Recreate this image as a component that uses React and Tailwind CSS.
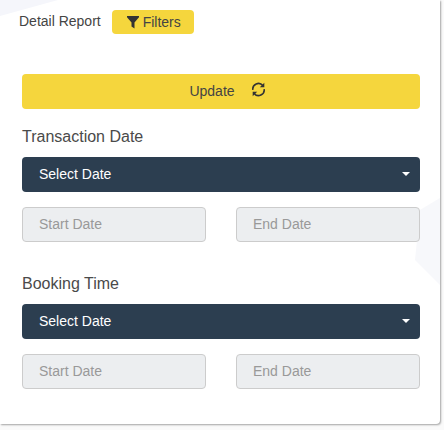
import React from "react";

const FONT = { fontFamily: '"Liberation Sans", Arial, sans-serif' };

const FilterIcon = () => (
  <svg width="12" height="14" viewBox="0 0 12 14" className="text-[#333]">
    <path d="M0 1h12v1.2L7.5 7.4V13.5L4.5 11.4V7.4L0 2.2z" fill="currentColor" />
  </svg>
);

const RefreshIcon = () => (
  <svg width="15" height="15" viewBox="0 0 16 16" fill="none" className="-mt-[4px] text-[#333]">
    <path d="M2 8.5A6 6 0 0 1 12.6 3.8" stroke="currentColor" strokeWidth="1.7" />
    <path d="M14 7.5A6 6 0 0 1 3.4 12.2" stroke="currentColor" strokeWidth="1.7" />
    <path d="M14.2 0.8V5.6H9.4z" fill="currentColor" />
    <path d="M1.8 15.2V10.4H6.6z" fill="currentColor" />
  </svg>
);

const DateSection = ({ label, labelClass }) => (
  <div>
    <div className={`text-base leading-[18px] text-[#4a4a4a] ${labelClass}`}>{label}</div>
    <div className="mt-[11px] flex h-[35px] items-center justify-between rounded-[4px] bg-[#2c3e50] pb-px pl-[17px] pr-[10px] text-sm text-white">
      <span>Select Date</span>
      <span className="h-0 w-0 border-x-[4px] border-t-[4px] border-x-transparent border-t-white" />
    </div>
    <div className="mt-[15px] flex justify-between">
      <div className="flex h-[35px] w-[184px] items-center rounded-[4px] border border-[#ccc] bg-[#eceef0] pb-px pl-[16px] text-sm text-[#999]">
        Start Date
      </div>
      <div className="flex h-[35px] w-[184px] items-center rounded-[4px] border border-[#ccc] bg-[#eceef0] pb-px pl-[16px] text-sm text-[#999]">
        End Date
      </div>
    </div>
  </div>
);

const App = () => {
  return (
    <div className="h-[430px] w-[444px] overflow-hidden bg-[#fafafa]" style={FONT}>
      <div className="relative h-[424px] w-[440px] rounded-br-[4px] bg-white shadow-[1px_1px_2px_rgba(0,0,0,0.35)]">
        {/* faint background shapes */}
        <svg className="absolute inset-0" width="440" height="424" viewBox="0 0 440 424">
          <polygon points="0,0 58,0 0,16" fill="#f5f6fb" />
          <polygon points="440,198 420,210 415,260 440,285" fill="#f7f8fb" />
        </svg>

        <div className="relative pl-[22px] pr-[20px] pt-[10px]">
          <div className="-ml-[3px] flex items-start">
            <span className="mt-px text-sm leading-[20px] text-[#444]">Detail Report</span>
            <div className="ml-[11px] flex h-[24px] w-[82px] items-center justify-center gap-[4px] rounded-[4px] bg-[#f5d63d] pl-[2px] text-sm text-[#444]">
              <FilterIcon />
              Filters
            </div>
          </div>

          <div className="mt-[40px] flex h-[35px] items-center justify-center gap-[16px] rounded-[4px] bg-[#f5d63d] pb-px pl-[13px] text-sm text-[#444]">
            Update
            <RefreshIcon />
          </div>

          <DateSection label="Transaction Date" labelClass="mt-[19px]" />
          <DateSection label="Booking Time" labelClass="mt-[33px]" />
        </div>
      </div>
    </div>
  );
};

export default App;
